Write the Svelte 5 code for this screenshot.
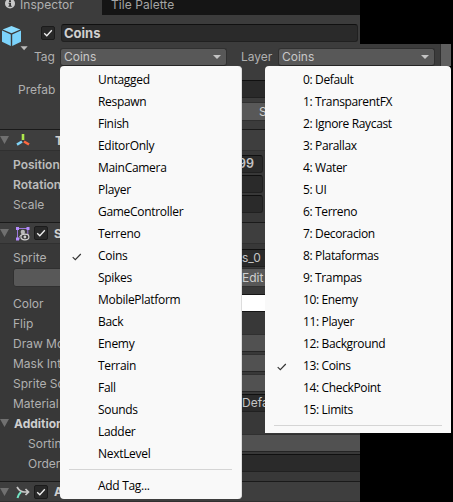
<script>
  const tags = ['Untagged', 'Respawn', 'Finish', 'EditorOnly', 'MainCamera', 'Player', 'GameController', 'Terreno', 'Coins', 'Spikes', 'MobilePlatform', 'Back', 'Enemy', 'Terrain', 'Fall', 'Sounds', 'Ladder', 'NextLevel'];
  const layers = ['Default', 'TransparentFX', 'Ignore Raycast', 'Parallax', 'Water', 'UI', 'Terreno', 'Decoracion', 'Plataformas', 'Trampas', 'Enemy', 'Player', 'Background', 'Coins', 'CheckPoint', 'Limits'];
  const transform = [
    { label: 'Position', value: '99', bold: true },
    { label: 'Rotation', value: '', bold: true },
    { label: 'Scale', value: '', bold: false }
  ];
  const renderer = [
    { label: 'Color', kind: 'white' },
    { label: 'Flip', kind: 'none' },
    { label: 'Draw Mo', kind: 'drop' },
    { label: 'Mask Int', kind: 'drop' },
    { label: 'Sprite So', kind: 'drop' },
    { label: 'Material', kind: 'field', value: 'Defa' }
  ];
</script>

{#snippet check()}
  <span class="check"><svg width="14" height="14" viewBox="0 0 14 14"><path d="M3.2 7.3 5.8 9.8 10.8 4.2" fill="none" stroke="#f0f0f0" stroke-width="1.3" /></svg></span>
{/snippet}

{#snippet fold()}
  <svg class="fold" width="9" height="8" viewBox="0 0 9 8"><path d="M0 0H9L4.5 8Z" fill="#707070" /></svg>
{/snippet}

{#snippet tick()}
  <svg class="tick" width="10" height="8" viewBox="0 0 10 8"><path d="M.7 4.2 3.3 6.7 8.8 1" fill="none" stroke="#333" stroke-width="1.15" /></svg>
{/snippet}

<div class="screen">
  <div class="tabs">
    <div class="tab active">
      <svg width="10" height="10" viewBox="0 0 10 10"><circle cx="5" cy="4.5" r="5" fill="#c8c8c8" /><path d="M4 1.2h2v1.7H4zM3.5 3.8H6v3h.8v1H3.4v-1h.8V4.7h-.7z" fill="#333" /></svg>
      <span>Inspector</span>
    </div>
    <div class="tab">Tile Palette</div>
  </div>

  <div class="object">
    <div class="cube">
      <svg width="29" height="28" viewBox="0 0 29 28">
        <path d="M11.5 1 20.3 4.5 11.5 8.2 2.7 4.5Z" fill="#8adcff" />
        <path d="M2 5.6 10.8 9.5V20.9L2 16.7Z" fill="#7cd3fb" />
        <path d="M12.2 9.5 21 5.6V16.7L12.2 20.9Z" fill="#7cd3fb" />
        <path d="M20.5 21.3h7.2L24.1 25.3Z" fill="#bcbcbc" />
      </svg>
    </div>
    <div class="objrows">
      <div class="namerow">{@render check()}<div class="name">Coins</div></div>
      <div class="tagrow">
        <span class="taglabel">Tag</span>
        <div class="drop tagdrop">Coins<i></i></div>
        <span class="layerlabel">Layer</span>
        <div class="drop layerdrop">Coins<i></i></div>
        <div class="scroll"></div>
      </div>
    </div>
  </div>

  <div class="panel">
    <div class="prefab"><div class="row"><label class="pre">Prefab</label><div class="field wide"></div></div>
      <div class="row second"><div class="button select">S</div></div>
    </div>
    <div class="head">
      {@render fold()}
      <svg class="axes" width="14" height="14" viewBox="0 0 14 14" fill="none" stroke-width="2.6"><path d="M7 1V7" stroke="#aee84c" /><path d="M6 8.5 1 11.6" stroke="#7fd3f7" /><path d="M8 8.5 13 11.5" stroke="#ff6940" /></svg>
      <b class="ttitle">T</b>
    </div>
    <div class="transform">
      {#each transform as t}
        <div class="row"><label class:bold={t.bold}>{t.label}</label><div class="field value">{t.value}</div></div>
      {/each}
    </div>
    <div class="head">
      {@render fold()}
      <svg class="spriteicon" width="15" height="15" viewBox="0 0 15 15" fill="none">
        <path d="M2.5 13V2.5H12.8V8" stroke="#9a78da" /><path d="M2.5 12.8H5" stroke="#9a78da" />
        <path d="M1 1h3v3H1zM11.5 1h3v3h-3zM1 11.5h3v3H1z" fill="#b88dff" />
        <circle cx="7.8" cy="6" r="2.2" fill="#b9b9b9" /><path d="M4.2 11.5Q5 8 9 8.3L13.8 9" stroke="#b9b9b9" />
        <ellipse cx="9.9" cy="11" rx="4" ry="2.8" fill="#383838" stroke="#d0d0d0" stroke-width="1.2" /><circle cx="9.9" cy="11" r="1.4" fill="#d0d0d0" />
      </svg>
      {@render check()}<b class="stitle">S</b>
    </div>
    <div class="sprite">
      <div class="row"><label>Sprite</label><div class="field spritename">s_0</div></div>
      <div class="button open">Edit</div>
    </div>
    <div class="rendererrows">
      {#each renderer as r}
        <div class="row"><label>{r.label}</label><div class="wide {r.kind}">{r.value ?? ''}</div></div>
      {/each}
      <div class="row additional">{@render fold()}<b>Addition</b></div>
      <div class="row nested"><label>Sortin</label><div class="wide drop"></div></div>
      <div class="row nested"><label>Order</label><div class="wide field"></div></div>
    </div>
    <div class="head last">
      {@render fold()}
      <svg class="axes" width="14" height="14" viewBox="0 0 14 14" fill="none"><path d="M1 2Q4 7 8 7H12M9.5 4 12.5 7 9.5 10" stroke="#c9c9c9" stroke-width="1.7" /><path d="M5 7Q2.5 9 1.5 13" stroke="#72e5c4" stroke-width="2" /></svg>
      {@render check()}<b class="stitle">A</b>
    </div>
  </div>

  <div class="menu tags">
    {#each tags as tag}
      <div class="item">{#if tag === 'Coins'}{@render tick()}{/if}{tag}</div>
    {/each}
    <hr />
    <div class="item">Add Tag...</div>
  </div>
  <div class="menu layers">
    {#each layers as layer, n}
      <div class="item">{#if layer === 'Coins'}{@render tick()}{/if}{n}: {layer}</div>
    {/each}
    <hr />
  </div>
</div>

<style>
  :global(body) { background: #000; overflow: hidden; }
  .screen, .screen * { box-sizing: border-box; }
  .screen { position: relative; width: 453px; height: 502px; overflow: hidden; background: #000; color: #b0b0b0; font: 12px Inter, sans-serif; white-space: nowrap; display: flex; flex-direction: column; }
  svg { display: block; flex: none; }
  .tabs { display: flex; width: 360px; height: 15px; background: #151515; flex: none; }
  .tab { padding-left: 9px; line-height: 9px; height: 15px; color: #a4a4a4; letter-spacing: .05px; }
  .tab.active { display: flex; width: 102px; gap: 5px; padding-left: 5px; background: #3c3c3c; color: #b0b0b0; }
  .tab svg { margin-top: -1px; }
  .object { display: flex; height: 51px; flex: none; background: linear-gradient(#3c3c3c, #3c3c3c) 0 0 / 360px 29px no-repeat, linear-gradient(#3c3c3c, #3c3c3c) 0 29px / 451px 22px no-repeat; }
  .cube { width: 29px; padding-top: 10px; }
  .objrows { display: flex; flex-direction: column; width: 422px; }
  .namerow { display: flex; align-items: center; height: 33px; padding: 3px 0 0 12px; gap: 6px; }
  .check { width: 14px; height: 14px; background: #292929; border: 1px solid #1b1b1b; border-radius: 2px; flex: none; }
  .check svg { margin: -1px; }
  .name { width: 297px; height: 18px; line-height: 17px; padding-left: 2px; font-size: 13px; font-weight: 700; color: #d0d0d0; background: #2a2a2a; border: 1px solid #202020; border-top-color: #101010; border-radius: 3px; }
  .tagrow { display: flex; height: 18px; line-height: 18px; }
  .taglabel { width: 31px; padding-left: 5px; }
  .layerlabel { width: 51px; padding-left: 14px; }
  .drop { background: #515151; border: 1px solid #303030; border-bottom-color: #242424; border-radius: 3px; color: #c8c8c8; }
  .tagrow .drop { display: flex; justify-content: space-between; align-items: center; height: 18px; padding: 0 5px 0 3px; line-height: 16px; background: #585858; }
  .tagdrop { width: 167px; } .layerdrop { width: 157px; }
  .drop i { border: 4px solid transparent; border-top-color: #c4c4c4; border-bottom: 0; }
  .scroll { width: 10px; height: 22px; margin: -4px 0 0 6px; background: #5f5f5f; box-shadow: -1px 0 #303030; }
  .panel { width: 360px; height: 436px; background: #383838; }
  .row { display: flex; align-items: center; height: 20px; }
  label { width: 137px; padding-left: 13px; flex: none; }
  .bold { font-weight: 600; color: #bcbcbc; }
  .wide { width: 223px; height: 18px; flex: none; }
  .field { background: #2a2a2a; border: 1px solid #202020; border-top-color: #101010; color: #c4c4c4; height: 18px; line-height: 16px; border-radius: 3px; }
  .prefab { height: 63px; padding-top: 13px; background: #3c3c3c; }
  .pre { padding-left: 18px; }
  .second { padding: 4px 0 0 180px; }
  .button { height: 19px; background: #585858; border: 1px solid #303030; border-radius: 3px; line-height: 17px; color: #d0d0d0; }
  .select { width: 180px; padding-left: 78px; }
  .head { display: flex; align-items: center; height: 22px; border-top: 1px solid #1a1a1a; border-bottom: 1px solid #303030; background: #3e3e3e; }
  .head .fold { margin-right: 7px; } .head b { font-size: 12px; font-weight: 700; color: #cfcfcf; }
  .ttitle { margin-left: 25px; } .spriteicon { margin-left: -1px; } .head .check { margin-left: 4px; } .stitle { margin-left: 6px; }
  .transform { height: 71px; padding-top: 3px; }
  .value { width: 126px; text-align: right; padding-right: 8px; font-size: 12.5px; font-weight: 600; }
  .sprite { height: 49px; padding-top: 3px; }
  .spritename { width: 220px; padding-left: 104px; }
  .open { margin-left: 13px; padding-left: 228px; }
  .sprite .row { height: 21px; }
  .white { background: #fff; border: 1px solid #151515; }
  .rendererrows .field { padding-left: 104px; }
  .rendererrows .wide { border-right: 0; border-radius: 3px 0 0 3px; }
  .rendererrows { height: 188px; }
  .additional .fold { margin-right: 5px; } .additional b { font-weight: 700; font-size: 12px; color: #cfcfcf; }
  .nested label { padding-left: 28px; }
  .last { height: 21px; }
  .menu { position: absolute; top: 66px; background: #f9f9f9; color: #000; font: 12px 'Open Sans', 'Noto Sans', sans-serif; letter-spacing: -.3px; }
  .tags { left: 60px; width: 182px; height: 433px; border-radius: 4px; padding-top: 3px; border-right: 1px solid #ddd; }
  .layers { left: 265px; width: 186px; height: 367px; padding-top: 3px; border-radius: 4px 4px 0 0; letter-spacing: -.36px; }
  .item { position: relative; height: 22px; line-height: 22px; padding-left: 38px; }
  .tick { position: absolute; left: 12px; top: 8px; }
  hr { margin: 4px 9px 5px; border: 0; height: 1px; background: #d5d5d5; }
</style>
